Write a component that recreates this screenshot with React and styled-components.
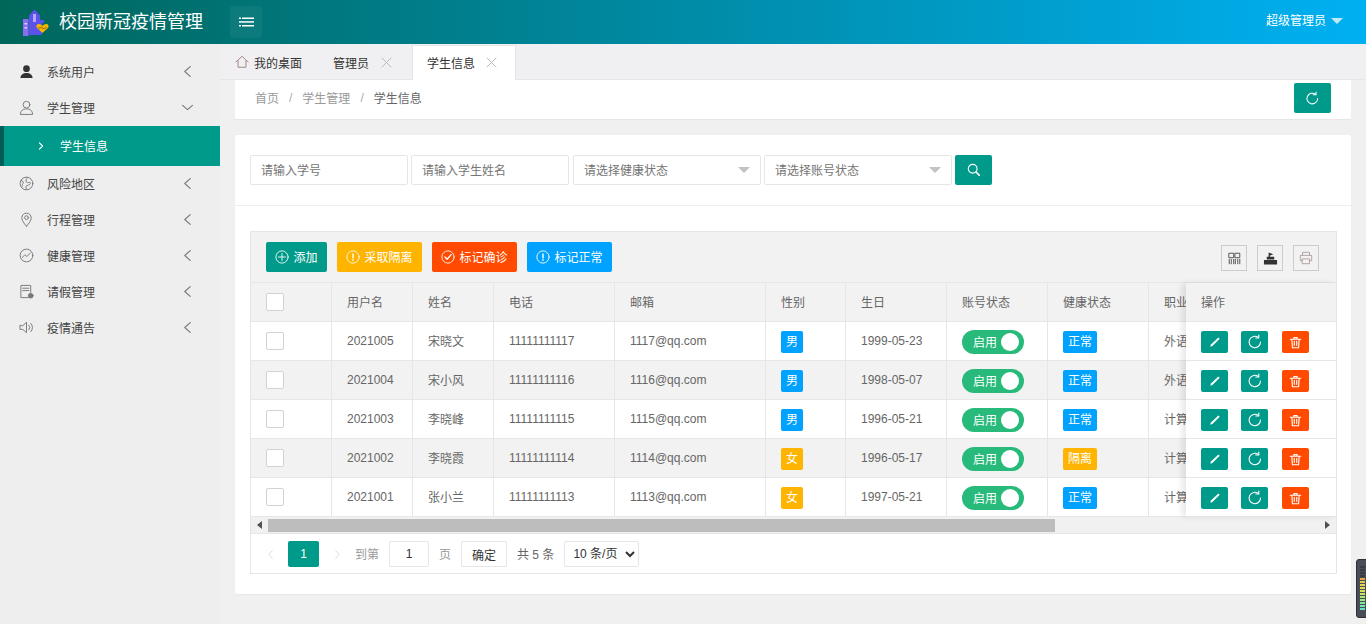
import React from "react";
import styled, { createGlobalStyle } from "styled-components";

const Global = createGlobalStyle`
  html, body { margin: 0; padding: 0; height: 100%; overflow: hidden; }
  body { font-family: "Liberation Sans", "Noto Sans CJK SC", sans-serif; font-size: 12px; color: #666; background: #f0f0f0; }
  * { box-sizing: border-box; }
`;

const Page = styled.div`display: flex; flex-direction: column; height: 624px; width: 1366px; position: relative;`;

const Header = styled.header`
  height: 44px; flex: none; display: flex; align-items: center;
  background: linear-gradient(to right, #00665a, #00b0f2); color: #fff;
`;
const Brand = styled.div`width: 230px; display: flex; align-items: center; padding-left: 22px; gap: 9px;`;
const BrandName = styled.span`font-size: 18px; line-height: 44px; white-space: nowrap;`;
const Toggle = styled.button`
  width: 32px; height: 32px; border: 0; padding: 0; border-radius: 3px; color: #fff;
  background: rgba(255,255,255,.05); display: flex; align-items: center; justify-content: center;
`;
const UserMenu = styled.div`margin-left: auto; padding: 0 23px 6px 0; display: flex; align-items: center; gap: 5px; font-size: 12px;`;
const Caret = styled.i`width: 0; height: 0; margin-top: 3px; border-style: solid; border-width: 6px 6px 0; border-color: #bfeaf8 transparent transparent;`;

const Body = styled.div`flex: 1; display: flex; min-height: 0;`;
const Side = styled.aside`width: 220px; flex: none; background: #eee; padding-top: 10px;`;
const NavItem = styled.div`
  height: 36px; display: flex; align-items: center; padding-left: 19px; color: #444; position: relative;
`;
const NavIcon = styled.span`width: 15px; height: 16px; margin: -2px 13px 0 0; display: flex; align-items: center; justify-content: center; color: #777;`;
const NavLabel = styled.span`flex: 1; color: #444; margin-bottom: 1px;`;
const NavChevron = styled.span`width: 11px; margin-right: 27px; margin-top: -1px; display: flex; color: #777;`;
const NavSub = styled.div`
  height: 40px; display: flex; align-items: center; padding: 0 0 1px 33px; gap: 15px; color: #fff;
  background: #009a8a; border-left: 4px solid #005e57;
`;

const Main = styled.main`flex: 1; min-width: 0; background: #f0f0f0;`;
const Tabs = styled.div`height: 36px; display: flex; align-items: flex-end; border-bottom: 1px solid #e6e6e6; background: #f0eff1;`;
const Tab = styled.div`
  height: ${p => (p.$active ? 35 : 34)}px; display: flex; align-items: center; color: #333; margin-bottom: -1px;
  padding: 0 ${p => p.$pr}px 2px 15px; gap: ${p => p.$gap}px;
  background: ${p => (p.$active ? "#fff" : "transparent")};
  ${p => p.$active && "border: 1px solid #e6e6e6; border-bottom: 0; padding-left: 14px;"}
`;
const Crumbs = styled.div`
  margin: 0 15px; height: 40px; background: #fff; border-bottom: 1px solid #e6e6e6;
  display: flex; align-items: center; padding: 0 20px 4px; color: #999;
`;
const CrumbSep = styled.span`margin: 0 10px; color: #aaa;`;
const CrumbNow = styled.span`color: #666;`;
const Teal = styled.button`
  border: 0; padding: 0; color: #fff; background: #009a8a; border-radius: 2px;
  display: flex; align-items: center; justify-content: center; width: 37px; height: 30px;
`;
const RefreshBtn = styled(Teal)`margin-left: auto; margin-top: 1px;`;

const Card = styled.section`margin: 15px 15px 0; height: 459px; background: #fff; border-radius: 2px; box-shadow: 0 1px 2px rgba(0,0,0,.04);`;
const SearchBar = styled.div`height: 71px; padding: 20px 15px 0; display: flex; border-bottom: 1px solid #eee;`;
const Field = styled.div`
  width: ${p => p.$w}px; height: 30px; border: 1px solid #e6e6e6; border-radius: 2px; color: #757575;
  margin-right: ${p => p.$gap}px;
  display: flex; align-items: center; justify-content: space-between; padding: 0 10px 2px; background: #fff;
`;
const SelectCaret = styled.i`width: 0; height: 0; margin-top: 2px; border-style: solid; border-width: 6px 6px 0; border-color: #c2c2c2 transparent transparent;`;

const TableBox = styled.div`margin: 25px 14px 0 15px; height: 343px; border: 1px solid #e6e6e6; position: relative;`;
const Toolbar = styled.div`height: 51px; padding: 10px 15px; display: flex; gap: 10px; background: #f2f2f2; border-bottom: 1px solid #e6e6e6; align-items: flex-start;`;
const ToolBtn = styled.button`
  height: 30px; width: ${p => p.$w}px; border: 0; border-radius: 2px; padding: 0 0 2px; color: #fff; background: ${p => p.$bg};
  font: inherit; display: flex; align-items: center; justify-content: center; gap: 4px;
  & > svg { margin-top: 2px; }
`;
const IconBtns = styled.div`margin-left: auto; display: flex; gap: 10px; padding-top: 3px; margin-right: 2px;`;
const IconBtn = styled.div`width: 26px; height: 26px; border: 1px solid #ccc; display: flex; align-items: center; justify-content: center; color: #444;`;

const Scroller = styled.div`height: 234px; overflow: hidden;`;
const Grid = styled.table`border-collapse: separate; border-spacing: 0; table-layout: fixed; width: 1240px;`;
const Th = styled.th`
  height: 39px; background: #f2f2f2; font-weight: 400; text-align: left; padding: 0 15px ${p => (p.$box ? 0 : 2)}px; color: #666;
  border-right: 1px solid #e6e6e6; border-bottom: 1px solid #e6e6e6; white-space: nowrap; overflow: hidden;
`;
const Td = styled.td`
  height: 39px; background: ${p => (p.$alt ? "#f2f2f2" : "#fff")}; color: #666;
  padding: ${p => (p.$widget ? "2px 15px 0" : p.$cjk ? "0 15px 2px" : "0 15px")};
  border-right: 1px solid #e6e6e6; border-bottom: 1px solid #e6e6e6; white-space: nowrap; overflow: hidden;
`;
const Check = styled.i`display: block; width: 18px; height: 18px; background: #fff; border: 1px solid #d2d2d2; border-radius: 2px;`;
const Tag = styled.span`
  display: inline-flex; align-items: center; justify-content: center; height: 22px; width: ${p => p.$w}px; padding-bottom: 3px;
  color: #fff; border-radius: 2px; background: ${p => p.$bg}; vertical-align: middle;
`;
const Switch = styled.span`
  display: inline-flex; align-items: center; width: 62px; height: 24px; border-radius: 12px; background: #27ba7b;
  color: #fff; padding-left: 11px; gap: 4px; vertical-align: middle;
`;
const SwitchText = styled.span`padding-bottom: 2px;`;
const Knob = styled.i`width: 18px; height: 18px; border-radius: 50%; background: #fff;`;

const FixedCol = styled.div`
  position: absolute; right: 0; top: 51px; width: 150px; background: #fff;
  box-shadow: -4px 0 6px rgba(0,0,0,.09);
`;
const FixedHead = styled.div`height: 39px; background: #f2f2f2; padding: 0 0 2px 15px; display: flex; align-items: center; border-bottom: 1px solid #e6e6e6;`;
const FixedRow = styled.div`height: 39px; display: flex; align-items: center; padding: 2px 0 0 15px; gap: 13px; border-bottom: 1px solid #e6e6e6;`;
const ActBtn = styled.button`
  width: 27px; height: 22px; border: 0; padding: 0; border-radius: 2px; color: #fff; background: ${p => p.$bg};
  display: flex; align-items: center; justify-content: center;
  &:last-child { margin-left: 1px; }
`;

const HBar = styled.div`height: 17px; display: flex; align-items: center; background: #f1f1f1; border-bottom: 1px solid #e6e6e6;`;
const HArrow = styled.span`width: 17px; flex: none; display: flex; justify-content: center; color: #505050;`;
const HThumb = styled.div`height: 13px; background: #bdbdbd; flex: none;`;
const HTrack = styled.div`flex: 1; display: flex;`;

const Pager = styled.div`height: 39px; padding: 7px 0 0 15px; display: flex; align-items: flex-start; color: #999;`;
const PagerArrow = styled.span`height: 26px; display: flex; align-items: center; color: #d2d2d2; margin: ${p => p.$m};`;
const PageNow = styled.span`width: 31px; height: 26px; background: #009a8a; border-radius: 2px; color: #fff; display: flex; align-items: center; justify-content: center;`;
const PagerText = styled.span`height: 26px; padding-bottom: 2px; display: flex; align-items: center; margin: ${p => p.$m}; color: ${p => p.$c || "#999"};`;
const PagerInput = styled.div`width: 40px; height: 26px; border: 1px solid #e6e6e6; border-radius: 2px; display: flex; align-items: center; justify-content: center; color: #333; background: #fff;`;
const PagerBtn = styled.button`width: 46px; height: 26px; border: 1px solid #e6e6e6; border-radius: 2px; color: #333; background: #fff; font: inherit; padding: 0; margin-left: 10px;`;
const PagerSelect = styled.select`width: 75px; height: 26px; border: 1px solid #e6e6e6; border-radius: 2px; color: #333; background: #fff; font: inherit; margin-left: 10px; padding: 0 0 0 4px; outline: 0;`;

const Meter = styled.div`
  position: absolute; left: 1356px; top: 559px; width: 14px; height: 59px; background: #4a4d57; border-radius: 3px;
  display: flex; flex-direction: column; gap: 1px; padding: 6px 0 0 3px; border: 1px solid #2e3038;
`;
const MeterBar = styled.i`display: block; width: 5px; height: 2px; background: ${p => p.$c};`;

const Svg = ({ s = 14, sw = 1.3, fill = "none", children, vb = "0 0 16 16" }) => (
  <svg width={s} height={s} viewBox={vb} fill={fill} stroke={fill === "none" ? "currentColor" : "none"} strokeWidth={sw} strokeLinecap="round" strokeLinejoin="round">{children}</svg>
);

const Logo = () => (
  <svg width="28" height="29" viewBox="0 0 28 29">
    <rect x="1" y="11" width="5.500" height="17" fill="#8b6bf0" />
    <rect x="2.500" y="15" width="2.500" height="1.500" fill="#ddd6ff" /><rect x="2.500" y="19" width="2.500" height="1.500" fill="#ddd6ff" />
    <path d="M7 27V7.500l5.500-6 5.500 6V15h2v12z" fill="#5b52ea" />
    <rect x="11" y="6" width="3" height="8" fill="#b7a6ff" />
    <rect x="18" y="12" width="4" height="3" fill="#5b52ea" />
    <path d="M20.500 25l-5.200-4.700c-1.700-1.800-.9-4.300 1.400-4.300 1.700 0 3 .9 3.800 1.800.8-.9 2.100-1.800 3.800-1.800 2.300 0 3.100 2.500 1.400 4.300z" fill="#f4b400" />
    <path d="M16 20h2.500l1-1.300 1.500 2.300 1-1h3" stroke="#8a6500" strokeWidth=".8" fill="none" />
  </svg>
);

const Chevron = ({ down }) => (
  <Svg s={11} sw={1} vb="0 0 10 10">{down ? <path d="M.5 3l4.500 4 4.500-4" /> : <path d="M7.500.5L2.500 5l5 4.500" />}</Svg>
);
const Refresh = ({ s = 15 }) => (
  <Svg s={s} sw={1.1}><path d="M13.500 8a5.700 5.700 0 1 1-2.100-4.400" /><path d="M11.800 1v3h-3" /></Svg>
);
const Pencil = () => (
  <Svg s={14} fill="#fff"><path d="M11.800 2.800l1.600 1.600-8.300 8.300-2.500.7.700-2.500z" /></Svg>
);
const Trash = () => (
  <Svg s={13} sw={1.4}><path d="M1.500 4h13M6 4V2h4v2M3.500 4l.7 10.500h7.600l.7-10.500M6.500 6.500v5M9.500 6.500v5" /></Svg>
);
const CircleIcon = ({ children }) => (
  <Svg s={14} sw={1}><circle cx="8" cy="8" r="7" />{children}</Svg>
);
const X = () => (
  <Svg s={11} sw={1} vb="0 0 11 11"><path d="M1 1l9 9M10 1l-9 9" stroke="#bbb" /></Svg>
);

const navTop = [
  { label: "系统用户", icon: <Svg s={15} fill="#333"><circle cx="8" cy="5" r="3.600" /><path d="M1.500 15c.3-4 2.800-5.500 6.500-5.500s6.200 1.500 6.500 5.500z" /></Svg> },
  { label: "学生管理", down: true, icon: <Svg s={15} sw={1}><circle cx="8" cy="5" r="3.600" /><path d="M1.500 15c.3-4 2.800-5.500 6.500-5.500s6.200 1.500 6.500 5.500z" /></Svg> },
];
const navBottom = [
  { label: "风险地区", icon: <Svg s={15} sw={1}><circle cx="8" cy="8" r="6.800" /><path d="M2 5c2 0 3 1 2.500 2.500S3 9.500 3.500 11M9 1.500C8 3.500 6.500 5 8 6.500s3-.5 4 .5-1 3-3 3-2 2.500-1 4" /></Svg> },
  { label: "行程管理", icon: <Svg s={15} sw={1}><path d="M8 15.200C4.800 11.500 3 9 3 6.200a5 5 0 0 1 10 0C13 9 11.200 11.500 8 15.200z" /><circle cx="8" cy="6" r="2" /></Svg> },
  { label: "健康管理", icon: <Svg s={15} sw={1}><circle cx="8" cy="8" r="6.800" /><path d="M3.500 10l2.800-2.800 2 1.800 3.700-3.500" /></Svg> },
  { label: "请假管理", icon: <Svg s={15} sw={1}><path d="M12.500 9V1.500h-10.500v13h8" /><path d="M4 4.500h6.500M4 7h6.500" /><circle cx="12.500" cy="12.500" r="2.500" fill="#777" /></Svg> },
  { label: "疫情通告", icon: <Svg s={15} sw={1}><path d="M1 6v4h3l4 3.500v-11L4 6zM10.500 5.500a3.500 3.500 0 0 1 0 5M12.500 3.500a6 6 0 0 1 0 9" /></Svg> },
];

const Nav = ({ item }) => (
  <NavItem>
    <NavIcon>{item.icon}</NavIcon>
    <NavLabel>{item.label}</NavLabel>
    <NavChevron><Chevron down={item.down} /></NavChevron>
  </NavItem>
);

const cols = [81, 81, 81, 121, 151, 80, 101, 101, 101, 342];
const heads = ["", "用户名", "姓名", "电话", "邮箱", "性别", "生日", "账号状态", "健康状态", "职业"];
const rows = [
  ["2021005", "宋晓文", "11111111117", "1117@qq.com", "男", "1999-05-23", "正常", "外语学院"],
  ["2021004", "宋小风", "11111111116", "1116@qq.com", "男", "1998-05-07", "正常", "外语学院"],
  ["2021003", "李晓峰", "11111111115", "1115@qq.com", "男", "1996-05-21", "正常", "计算机学院"],
  ["2021002", "李晓霞", "11111111114", "1114@qq.com", "女", "1996-05-17", "隔离", "计算机学院"],
  ["2021001", "张小兰", "11111111113", "1113@qq.com", "女", "1997-05-21", "正常", "计算机学院"],
];
const BLUE = "#00a2ff", AMBER = "#ffb400", RED = "#ff4a00", TEAL = "#009a8a";
const meterColors = ["#3a3c44","#3a3c44","#3a3c44","#3a3c44","#e8a63a","#e8c64a","#e8d84e","#e0e050","#d4e458","#c4e660","#aee870","#96ea80","#7ee898","#6ce8b0","#60e4c0"];

export default function App() {
  return (
    <Page>
      <Global />
      <Header>
        <Brand><Logo /><BrandName>校园新冠疫情管理</BrandName></Brand>
        <Toggle aria-label="menu">
          <svg width="15" height="10" viewBox="0 0 15 10" fill="#fff"><rect x="0" y="0.500" width="2" height="1.500" /><rect x="3" y="0.500" width="12" height="1.500" /><rect y="4.200" width="15" height="1.500" /><rect x="0" y="8" width="2" height="1.500" /><rect x="3" y="8" width="12" height="1.500" /></svg>
        </Toggle>
        <UserMenu>超级管理员<Caret /></UserMenu>
      </Header>
      <Body>
        <Side>
          {navTop.map(n => <Nav key={n.label} item={n} />)}
          <NavSub>
            <Svg s={8} sw={1.400} vb="0 0 8 10"><path d="M2 1l4 4-4 4" /></Svg>
            学生信息
          </NavSub>
          {navBottom.map(n => <Nav key={n.label} item={n} />)}
        </Side>
        <Main>
          <Tabs>
            <Tab $pr={16} $gap={5}>
              <Svg s={14} sw={1}><path d="M1 8l7-6.500L15 8M3.500 6.500V14h9V6.500" stroke="#9a7a7a" /></Svg>
              我的桌面
            </Tab>
            <Tab $pr={20} $gap={12}>管理员<X /></Tab>
            <Tab $active $pr={18} $gap={11}>学生信息<X /></Tab>
          </Tabs>
          <Crumbs>
            首页<CrumbSep>/</CrumbSep>学生管理<CrumbSep>/</CrumbSep><CrumbNow>学生信息</CrumbNow>
            <RefreshBtn aria-label="refresh"><Refresh /></RefreshBtn>
          </Crumbs>
          <Card>
            <SearchBar>
              <Field $w={158} $gap={3}>请输入学号</Field>
              <Field $w={158} $gap={4}>请输入学生姓名</Field>
              <Field $w={188} $gap={3}>请选择健康状态<SelectCaret /></Field>
              <Field $w={188} $gap={3}>请选择账号状态<SelectCaret /></Field>
              <Teal aria-label="search">
                <Svg s={14} sw={1.300}><circle cx="6.500" cy="6.500" r="5" /><path d="M10.500 10.500l3.500 3.500" strokeWidth="2" /></Svg>
              </Teal>
            </SearchBar>
            <TableBox>
              <Toolbar>
                <ToolBtn $w={61} $bg={TEAL}><CircleIcon><path d="M8 4v8M4 8h8" /></CircleIcon>添加</ToolBtn>
                <ToolBtn $w={85} $bg={AMBER}><CircleIcon><path d="M8 4.500v4.500M8 11v.8" strokeWidth="1.600" /></CircleIcon>采取隔离</ToolBtn>
                <ToolBtn $w={85} $bg={RED}><CircleIcon><path d="M4.500 8l2.500 2.500 4.500-5" strokeWidth="1.500" /></CircleIcon>标记确诊</ToolBtn>
                <ToolBtn $w={85} $bg={BLUE}><CircleIcon><path d="M8 4.500v4.500M8 11v.8" strokeWidth="1.600" /></CircleIcon>标记正常</ToolBtn>
                <IconBtns>
                  <IconBtn><Svg s={13} sw={1.100}><path d="M1.500 1.500h5.500v5.500H1.500zM9 1.500h5.500v5.500H9zM1.500 9v5.500M4 9v5.500M7 9v5.500M9 9v5.500M12 9v5.500M14.500 9v5.500" /></Svg></IconBtn>
                  <IconBtn><Svg s={15} fill="#333"><path d="M1 9.500h14v5H1zM4 6h8v3H4zM6 1.500l5 2-3.500 1.300V6H6z" /></Svg></IconBtn>
                  <IconBtn><Svg s={14} sw={1}><path d="M4 5V1.500h8V5M4 11H1.500V5h13v6H12M4 9h8v5.500H4z" stroke="#aa9a9a" /></Svg></IconBtn>
                </IconBtns>
              </Toolbar>
              <Scroller>
                <Grid>
                  <colgroup>{cols.map((w, i) => <col key={i} style={{ width: w }} />)}</colgroup>
                  <thead>
                    <tr>{heads.map((h, i) => <Th key={i} $box={i === 0}>{i === 0 ? <Check /> : h}</Th>)}</tr>
                  </thead>
                  <tbody>
                    {rows.map((r, i) => {
                      const alt = i % 2 === 1;
                      return (
                        <tr key={r[0]}>
                          <Td $alt={alt}><Check /></Td>
                          <Td $alt={alt}>{r[0]}</Td>
                          <Td $alt={alt} $cjk>{r[1]}</Td>
                          <Td $alt={alt}>{r[2]}</Td>
                          <Td $alt={alt}>{r[3]}</Td>
                          <Td $alt={alt} $widget><Tag $w={22} $bg={r[4] === "男" ? BLUE : AMBER}>{r[4]}</Tag></Td>
                          <Td $alt={alt}>{r[5]}</Td>
                          <Td $alt={alt} $widget><Switch><SwitchText>启用</SwitchText><Knob /></Switch></Td>
                          <Td $alt={alt} $widget><Tag $w={34} $bg={r[6] === "正常" ? BLUE : AMBER}>{r[6]}</Tag></Td>
                          <Td $alt={alt} $cjk>{r[7]}</Td>
                        </tr>
                      );
                    })}
                  </tbody>
                </Grid>
              </Scroller>
              <HBar>
                <HArrow><svg width="5" height="8" viewBox="0 0 5 8" fill="currentColor"><path d="M5 0v8L0 4z" /></svg></HArrow>
                <HTrack><HThumb style={{ width: 787 }} /></HTrack>
                <HArrow><svg width="5" height="8" viewBox="0 0 5 8" fill="currentColor"><path d="M0 0v8l5-4z" /></svg></HArrow>
              </HBar>
              <Pager>
                <PagerArrow $m="0 13px 0 0"><Svg s={9} sw={1.100} vb="0 0 9 12"><path d="M7 1L2 6l5 5" /></Svg></PagerArrow>
                <PageNow>1</PageNow>
                <PagerArrow $m="0 13px 0 14px"><Svg s={9} sw={1.100} vb="0 0 9 12"><path d="M2 1l5 5-5 5" /></Svg></PagerArrow>
                <PagerText $m="0 10px 0 0">到第</PagerText>
                <PagerInput>1</PagerInput>
                <PagerText $m="0 0 0 10px">页</PagerText>
                <PagerBtn>确定</PagerBtn>
                <PagerText $m="0 0 0 10px" $c="#666">共 5 条</PagerText>
                <PagerSelect defaultValue="10"><option value="10">10 条/页</option></PagerSelect>
              </Pager>
              <FixedCol>
                <FixedHead>操作</FixedHead>
                {rows.map(r => (
                  <FixedRow key={r[0]}>
                    <ActBtn $bg={TEAL} aria-label="edit"><Pencil /></ActBtn>
                    <ActBtn $bg={TEAL} aria-label="reset"><Refresh s={16} /></ActBtn>
                    <ActBtn $bg={RED} aria-label="delete"><Trash /></ActBtn>
                  </FixedRow>
                ))}
              </FixedCol>
            </TableBox>
          </Card>
        </Main>
      </Body>
      <Meter>{meterColors.map((c, i) => <MeterBar key={i} $c={c} />)}</Meter>
    </Page>
  );
}
